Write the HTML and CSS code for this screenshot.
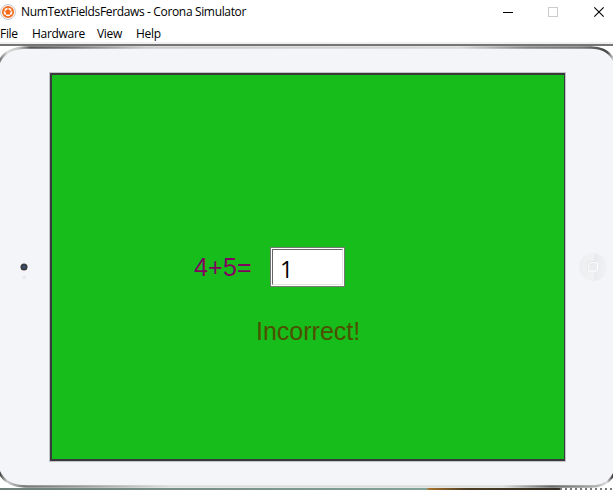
FILE: index.html
```html
<!DOCTYPE html>
<html lang="en">
<head>
<meta charset="utf-8">
<title>NumTextFieldsFerdaws - Corona Simulator</title>
<link rel="stylesheet" href="styles.css">
</head>
<body>
<div class="window">
  <header class="titlebar">
    <svg class="logo" width="16" height="16" viewBox="0 0 16 16">
      <circle cx="8" cy="8" r="7.4" fill="#fff" stroke="#bdbdbd" stroke-width=".9"/>
      <circle cx="8" cy="8" r="5.2" fill="#fff" stroke="#f66a1c" stroke-width="1.7"/>
      <path d="M8 5 10.9 7.1 9.8 10.4H6.2L5.1 7.1Z" fill="#f66a1c"/>
      <path d="M8 2.5v3M13 6.2l-2.4.9M11.2 12.4 9.8 10.4M4.8 12.4 6.2 10.4M3 6.2l2.4.9" stroke="#f66a1c" stroke-width=".9"/>
    </svg>
    <span class="title">NumTextFieldsFerdaws - Corona Simulator</span>
    <svg class="controls" width="110" height="24" viewBox="0 0 110 24" fill="none" shape-rendering="crispEdges">
      <path d="M0 12.5h10" stroke="#000"/>
      <rect x="45.5" y="7.5" width="9" height="9" stroke="#ccc"/>
      <path d="M91.3 7.3l9.4 9.4M100.7 7.3l-9.4 9.4" stroke="#000" stroke-width="1.1" shape-rendering="auto"/>
    </svg>
  </header>
  <nav class="menu">
    <span class="file">File</span><span class="hardware">Hardware</span><span class="view">View</span><span class="help">Help</span>
  </nav>
  <main class="tablet">
    <svg class="shell" width="613" height="446" viewBox="0 44 613 446">
      <defs>
        <linearGradient id="top" gradientUnits="userSpaceOnUse" x1="0" x2="613" y1="0" y2="0">
          <stop offset="0" stop-color="#777"/><stop offset=".012" stop-color="#ddd"/>
          <stop offset=".03" stop-color="#c4c4c4"/><stop offset=".05" stop-color="#555"/>
          <stop offset=".12" stop-color="#777"/><stop offset=".24" stop-color="#ccc"/>
          <stop offset=".75" stop-color="#d8d8d8"/><stop offset=".86" stop-color="#888"/>
          <stop offset=".95" stop-color="#777"/><stop offset=".99" stop-color="#444"/><stop offset="1" stop-color="#ccc"/>
        </linearGradient>
        <linearGradient id="bottom" gradientUnits="userSpaceOnUse" x1="0" x2="613" y1="0" y2="0">
          <stop offset="0" stop-color="#444"/><stop offset=".012" stop-color="#ccc"/>
          <stop offset=".04" stop-color="#777"/><stop offset=".13" stop-color="#999"/>
          <stop offset=".28" stop-color="#ddd"/><stop offset=".82" stop-color="#ddd"/>
          <stop offset=".9" stop-color="#666"/><stop offset=".97" stop-color="#aaa"/>
          <stop offset=".99" stop-color="#ddd"/><stop offset="1" stop-color="#333"/>
        </linearGradient>
        <linearGradient id="desk" gradientUnits="userSpaceOnUse" x1="0" x2="613" y1="0" y2="0">
          <stop offset="0" stop-color="#6f8178"/><stop offset=".695" stop-color="#82a297"/>
          <stop offset=".7" stop-color="#a7712b"/><stop offset=".76" stop-color="#4c3d24"/>
          <stop offset=".91" stop-color="#332e22"/><stop offset=".92" stop-color="#555"/><stop offset="1" stop-color="#555"/>
        </linearGradient>
      </defs>
      <rect x="-4" y="47.5" width="622" height="439" rx="27" fill="#f4f5f8"/>
      <path d="M-4 75Q-2 47.5 27 47.5H591Q615 47.5 618 75" fill="none" stroke="url(#top)" stroke-width="2.4"/>
      <path d="M-4 459Q-2 486.5 27 486.5H591Q615 486.5 618 459" fill="none" stroke="url(#bottom)" stroke-width="2.4"/>
      <path d="M0 489H560" stroke="url(#desk)" stroke-width="2"/>
      <path d="M560 489H613" stroke="#777" stroke-width="2" stroke-dasharray="2 3"/>
      <path d="M0 45h613" stroke="#757575" stroke-width="2"/>
    </svg>
    <div class="side camera">
      <svg width="12" height="20" viewBox="0 0 12 20">
        <circle cx="6" cy="5" r="3.5" fill="#3b3c40"/><circle cx="6" cy="5" r="1.3" fill="#315b8f"/>
        <circle cx="6.3" cy="15.5" r="1.7" fill="#e8e9eb"/>
      </svg>
    </div>
    <section class="screen">
      <div class="question">
        <span class="sum">4+5=</span>
        <div class="field"><span>1</span></div>
      </div>
      <p class="result">Incorrect!</p>
    </section>
    <div class="side home">
      <svg width="30" height="30" viewBox="0 0 30 30">
        <defs><linearGradient id="button"><stop offset="0" stop-color="#eeeff1"/><stop offset=".52" stop-color="#f0f1f3"/><stop offset=".54" stop-color="#e9eaed"/><stop offset="1" stop-color="#f1f2f5"/></linearGradient></defs>
        <circle cx="15" cy="15" r="14" fill="url(#button)"/>
        <rect x="10.5" y="10.5" width="9" height="8.5" rx="1.6" fill="#ebecef" stroke="#fff"/>
        <path d="M9.8 18v-6.5q0-1.8 1.8-1.8H18" fill="none" stroke="#d9dadd" stroke-width=".6"/>
      </svg>
    </div>
  </main>
</div>
</body>
</html>
```
FILE: styles.css
```css
* { box-sizing: border-box; }
body { margin: 0; background: #fff; overflow: hidden; }
.window { width: 613px; height: 490px; display: flex; flex-direction: column; overflow: hidden; font: 12px/16px "Open Sans", "Noto Sans", sans-serif; color: #000; }
.titlebar { height: 24px; display: flex; align-items: center; }
.logo { margin-right: 5px; }
.title { letter-spacing: -.35px; white-space: nowrap; }
.controls { margin-left: auto; }
.menu { height: 20px; display: flex; padding-top: 2px; border-bottom: 2px solid #f0f0f0; letter-spacing: -.3px; }
.file { width: 32px; }
.hardware { width: 65px; }
.view { width: 39px; }
.tablet { position: relative; height: 446px; display: grid; grid-template-columns: 50px 515px 48px; padding-top: 29px; align-items: start; }
.shell { position: absolute; inset: 0; }
.side { position: relative; height: 388px; display: flex; justify-content: center; }
.camera { padding-top: 189px; padding-right: 2px; }
.home { padding-top: 179px; justify-content: flex-start; padding-left: 13px; }
.screen { position: relative; height: 388px; background: #17bd1a; border: 2px solid #38393d; border-right-width: 1px; box-shadow: 0 0 0 1px #c2c4c7; padding: 172px 0 0 142px; font: 25px/30px "Liberation Sans", sans-serif; }
.question { display: flex; align-items: flex-start; height: 40px; }
.sum { width: 76px; padding-top: 5px; color: #800060; letter-spacing: .2px; }
.field { width: 75px; height: 40px; border: 1px solid #777; padding: 1px; background: #fff; font: 23px/38px "Open Sans", "Noto Sans", sans-serif; color: #000; }
.field span { display: block; height: 36px; padding-left: 7px; border: 1px solid; border-color: #666 #e3e3e3 #e3e3e3 #666; }
.result { margin: 29px 0 0 62px; color: #4c5000; }
```
